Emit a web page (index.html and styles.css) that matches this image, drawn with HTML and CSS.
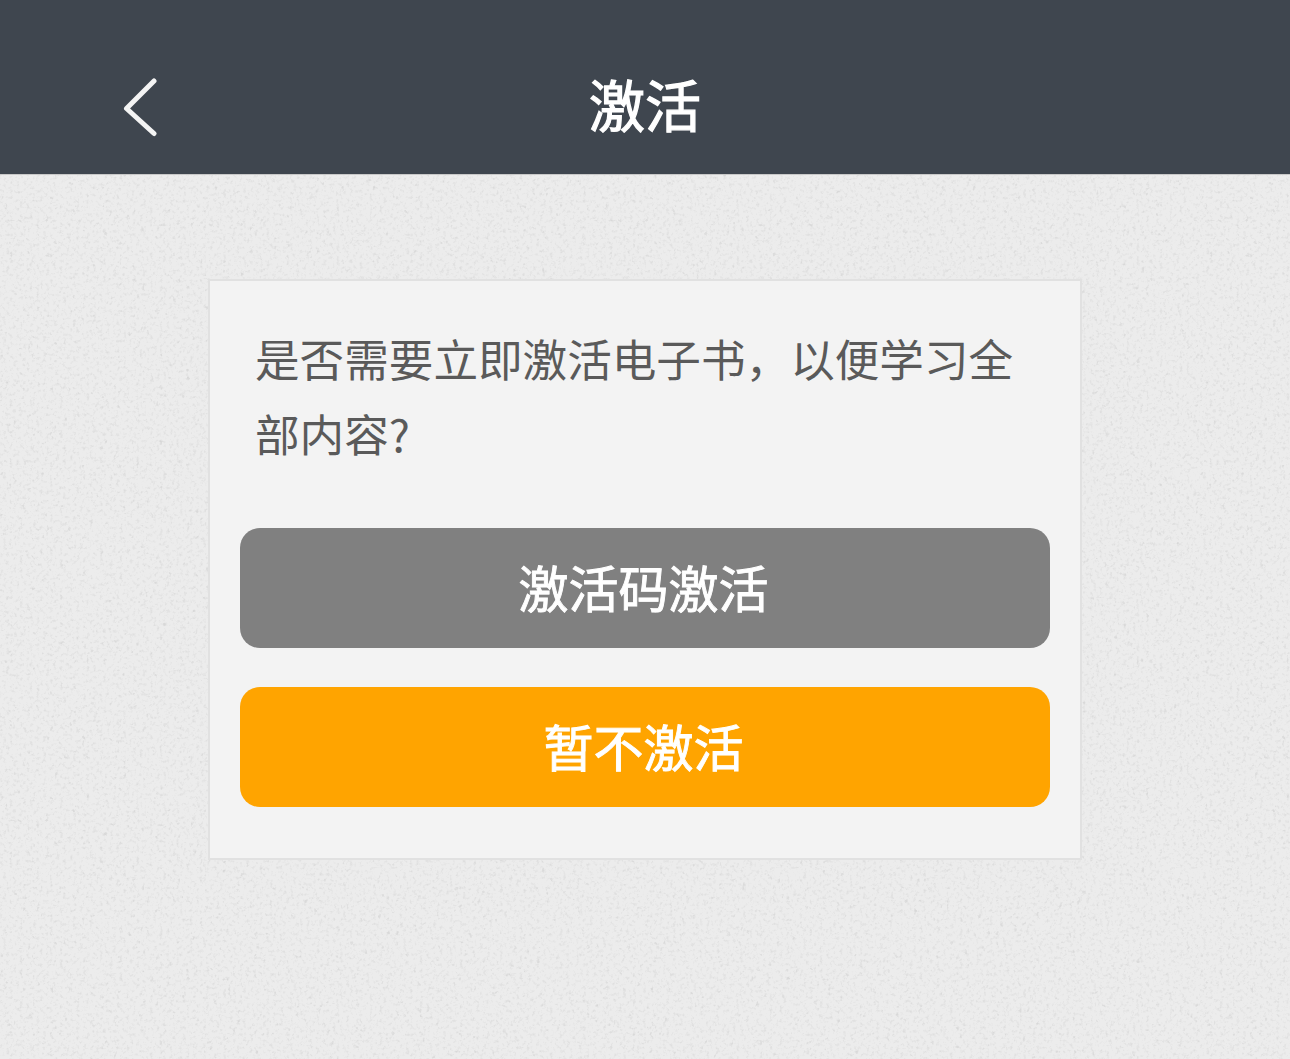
FILE: index.html
```html
<!DOCTYPE html>
<html lang="zh-CN">
<head>
<meta charset="utf-8">
<title>激活</title>
<link rel="stylesheet" href="styles.css">
</head>
<body>
<header class="topbar">
  <button class="back" aria-label="返回">
    <svg class="back-icon" width="34" height="60" viewBox="0 0 34 60"><path d="M31 3 L3.500 30.500 L31 55.500" fill="none" stroke="#f4f4f4" stroke-width="5" stroke-linecap="round" stroke-linejoin="round"/></svg>
  </button>
  <h1 class="title">激活</h1>
</header>
<main class="content">
  <section class="card">
    <p class="message">是否需要立即激活电子书，以便学习全部内容?</p>
    <div class="actions">
      <button class="btn btn-gray"><span class="btn-label">激活码激活</span></button>
      <button class="btn btn-orange"><span class="btn-label">暂不激活</span></button>
    </div>
  </section>
</main>
</body>
</html>
```
FILE: styles.css
```css
* { box-sizing: border-box; }
html, body { margin: 0; height: 100%; }
body {
  font-family: "Noto Sans CJK SC", "Noto Sans", sans-serif;
  background-color: #ececec;
  background-image:
    url("data:image/svg+xml,%3Csvg xmlns='http://www.w3.org/2000/svg' width='600' height='600'%3E%3Cfilter id='s'%3E%3CfeTurbulence type='fractalNoise' baseFrequency='0.22' numOctaves='2' seed='9'/%3E%3CfeColorMatrix values='0 0 0 0 0.6 0 0 0 0 0.6 0 0 0 0 0.6 7 0 0 0 -4.7'/%3E%3C/filter%3E%3Crect width='600' height='600' filter='url(%23s)' opacity='0.45'/%3E%3C/svg%3E"),
    url("data:image/svg+xml,%3Csvg xmlns='http://www.w3.org/2000/svg' width='400' height='400'%3E%3Cfilter id='n'%3E%3CfeTurbulence type='fractalNoise' baseFrequency='0.3' numOctaves='3' seed='4'/%3E%3CfeColorMatrix values='0 0 0 0 0.6 0 0 0 0 0.6 0 0 0 0 0.6 1.2 0 0 0 -0.62'/%3E%3C/filter%3E%3Crect width='400' height='400' filter='url(%23n)'/%3E%3C/svg%3E");
  overflow: hidden;
}
.topbar {
  position: relative;
  height: 175px;
  background: #3f464f;
  border-bottom: 1px solid #c9c9c9;
  display: flex;
  align-items: center;
  justify-content: center;
  padding-top: 31px;
}
.back {
  position: absolute;
  left: 123px;
  top: 78px;
  padding: 0;
  border: 0;
  background: none;
  line-height: 0;
}
.title {
  margin: 0;
  color: #fff;
  font-size: 56px;
  font-weight: 400;
  line-height: 64px;
  -webkit-text-stroke: 1.2px #fff;
}
.content {
  padding-top: 104px;
  display: flex;
  justify-content: center;
}
.card {
  width: 874px;
  height: 581px;
  background: #f3f3f3;
  border: 2px solid #e1e1e1;
  padding: 39px 30px 0;
}
.message {
  margin: 0;
  padding: 0 15px;
  color: #5a5a5a;
  font-size: 44.6px;
  line-height: 75px;
  height: 208px;
}
.actions {
  display: flex;
  flex-direction: column;
  gap: 39px;
}
.btn {
  height: 120px;
  width: 810px;
  border: 0;
  border-radius: 20px;
  color: #fff;
  font-family: inherit;
  font-size: 50px;
  font-weight: 400;
  padding: 0 3px 4px 0;
}
.btn-label { -webkit-text-stroke: 0.9px #fff; }
.btn-gray { background: #808080; }
.btn-orange { background: #ffa400; }
```
